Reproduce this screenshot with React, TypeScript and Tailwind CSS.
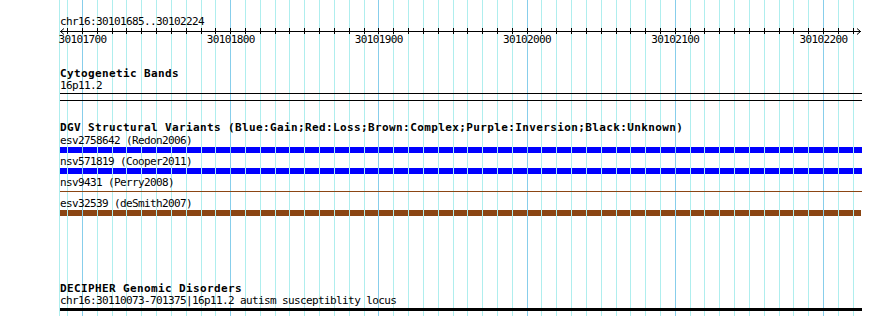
import React from "react";

const KS = Array.from({ length: 54 }, (_, i) => i - 1);
const gx = (k: number) => Math.floor(82.5 + 14.82 * k) + 0.5;
const MINOR = "#afeeee";
const MAJOR = "#87ceeb";

function Grid({ height }: { height: number }) {
  return (
    <svg width={890} height={height} className="block">
      <line x1={59.5} x2={59.5} y1={0} y2={height} stroke={MINOR} strokeWidth={1} />
      {KS.map((k) => (
        <line
          key={k}
          x1={gx(k)}
          x2={gx(k)}
          y1={0}
          y2={height}
          stroke={k % 10 === 0 ? MAJOR : MINOR}
          strokeWidth={1}
        />
      ))}
    </svg>
  );
}

function Axis() {
  return (
    <svg width={890} height={6} className="block overflow-visible">
      <line x1={60} x2={861} y1={3.5} y2={3.5} stroke="#000" strokeWidth={1} />
      {KS.map((k) => (
        <line key={k} x1={gx(k)} x2={gx(k)} y1={0} y2={6} stroke="#000" strokeWidth={1} />
      ))}
      <polyline points="64,0.5 60.5,3.5 64,6.5" fill="none" stroke="#000" strokeWidth={1} />
      <polyline points="857,0.5 860.5,3.5 857,6.5" fill="none" stroke="#000" strokeWidth={1} />
    </svg>
  );
}

function Bar({ className }: { className: string }) {
  return (
    <div className={"relative ml-[60px] h-[6px] overflow-hidden " + className}>
      <div className="absolute left-[-60px] top-0 pointer-events-none">
        <Grid height={6} />
      </div>
    </div>
  );
}

const small =
  "ml-[60px] h-[12px] text-[11px] leading-[12px] tracking-[-0.62px] whitespace-pre text-black";
const bold =
  "ml-[60px] h-[12px] text-[11px] leading-[12px] tracking-[0.38px] font-bold whitespace-pre text-black";

const labels = ["30101700", "30101800", "30101900", "30102000", "30102100", "30102200"];

export default function App() {
  return (
    <div className="relative w-[890px] h-[316px] overflow-hidden bg-white font-['DejaVu_Sans_Mono',monospace]">
      <div className="absolute left-0 top-0">
        <Grid height={316} />
      </div>
      <div className="relative flex flex-col pt-[16px]">
        <div className={small}>chr16:30101685..30102224</div>
        <Axis />
        <div className="flex ml-[8.4px] h-[12px]">
          {labels.map((l) => (
            <div
              key={l}
              className="w-[148.2px] shrink-0 text-center text-[11px] leading-[12px] tracking-[-0.62px] text-black"
            >
              {l}
            </div>
          ))}
        </div>

        <div className={bold + " mt-[22px]"}>Cytogenetic Bands</div>
        <div className={small}>16p11.2</div>
        <div className="ml-[60px] w-[802px] h-[1px] mt-[1px] bg-black" />
        <div className="ml-[60px] w-[802px] h-[1px] mt-[6px] bg-black" />

        <div className={bold + " mt-[21px]"}>
          DGV Structural Variants (Blue:Gain;Red:Loss;Brown:Complex;Purple:Inversion;Black:Unknown)
        </div>
        <div className={small + " mt-[1px]"}>esv2758642 (Redon2006)</div>
        <Bar className="w-[802px] bg-[#0000ff]" />
        <div className={small + " mt-[3px]"}>nsv571819 (Cooper2011)</div>
        <Bar className="w-[802px] bg-[#0000ff]" />
        <div className={small + " mt-[3px]"}>nsv9431 (Perry2008)</div>
        <div className="ml-[60px] w-[802px] h-[6px] pt-[2px]">
          <div className="h-[1px] bg-[#8b4513]" />
        </div>
        <div className={small + " mt-[3px]"}>esv32539 (deSmith2007)</div>
        <Bar className="w-[801px] bg-[#8b4513]" />

        <div className={bold + " mt-[67px]"}>DECIPHER Genomic Disorders</div>
        <div className={small}>chr16:30110073-701375|16p11.2 autism susceptiblity locus</div>
        <div className="ml-[60px] w-[802px] h-[3px] mt-[1px] bg-black" />
      </div>
    </div>
  );
}
